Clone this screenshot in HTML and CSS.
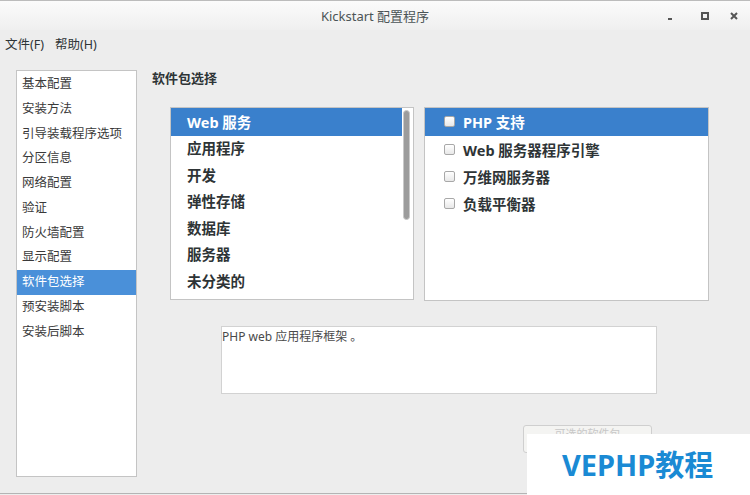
FILE: index.html
```html
<!DOCTYPE html>
<html lang="zh-CN">
<head>
    <meta charset="UTF-8">
    <title>Kickstart 配置程序</title>
    <link rel="stylesheet" href="styles.css">
</head>
<body>
    <div class="window">
        <div class="titlebar">
            <span></span>
            <span class="title">Kickstart 配置程序</span>
            <div class="controls">
                <svg class="min" width="10" height="10" viewBox="0 0 10 10"><rect x="2" y="7" width="4" height="2" fill="#555"/></svg>
                <svg width="10" height="10" viewBox="0 0 10 10"><rect x="2" y="2" width="6" height="6" fill="none" stroke="#555" stroke-width="2"/></svg>
                <svg width="10" height="10" viewBox="0 0 10 10"><path d="M2 2 L8 8 M8 2 L2 8" stroke="#555" stroke-width="2"/></svg>
            </div>
        </div>

        <div class="menubar">
            <span>文件(F)</span>
            <span>帮助(H)</span>
        </div>

        <div class="main">
            <div class="sidebar">
                <div class="side-item">基本配置</div>
                <div class="side-item">安装方法</div>
                <div class="side-item">引导装载程序选项</div>
                <div class="side-item">分区信息</div>
                <div class="side-item">网络配置</div>
                <div class="side-item">验证</div>
                <div class="side-item">防火墙配置</div>
                <div class="side-item">显示配置</div>
                <div class="side-item selected">软件包选择</div>
                <div class="side-item">预安装脚本</div>
                <div class="side-item">安装后脚本</div>
            </div>

            <div class="content">
                <div class="heading">软件包选择</div>

                <div class="lists">
                    <div class="group-box">
                        <div class="group-items">
                            <div class="group-item selected">Web 服务</div>
                            <div class="group-item">应用程序</div>
                            <div class="group-item">开发</div>
                            <div class="group-item">弹性存储</div>
                            <div class="group-item">数据库</div>
                            <div class="group-item">服务器</div>
                            <div class="group-item">未分类的</div>
                        </div>
                        <div class="scrollbar">
                            <div class="thumb"></div>
                        </div>
                    </div>

                    <div class="pkg-box">
                        <div class="pkg-item selected"><span class="check"></span>PHP 支持</div>
                        <div class="pkg-item"><span class="check"></span>Web 服务器程序引擎</div>
                        <div class="pkg-item"><span class="check"></span>万维网服务器</div>
                        <div class="pkg-item"><span class="check"></span>负载平衡器</div>
                    </div>
                </div>

                <div class="description">PHP web 应用程序框架 。</div>

                <button class="opt-button">可选的软件包</button>
            </div>
        </div>
    </div>

    <div class="watermark">VEPHP教程</div>
</body>
</html>
```

FILE: styles.css
```css
* {
    margin: 0;
    padding: 0;
    box-sizing: border-box;
}

body {
    width: 750px;
    height: 495px;
    overflow: hidden;
    background: #ededed;
    font-family: "Noto Sans", "Noto Sans CJK SC", sans-serif;
    color: #333;
    position: relative;
}

.window {
    height: 494px;
    border-bottom: 1px solid #b4b4b4;
    border-top: 1px solid #bcbcbc;
}

.titlebar {
    height: 29px;
    display: grid;
    grid-template-columns: 1fr auto 1fr;
    align-items: center;
    background: linear-gradient(#fbfbfb, #efefef);
}

.title {
    font-size: 13px;
    color: #4b5456;
}

.controls {
    display: flex;
    justify-content: flex-end;
    gap: 19px;
    padding-right: 11px;
}

.controls .min {
    margin-right: 5px;
}

.menubar {
    height: 26px;
    display: flex;
    align-items: center;
    gap: 11px;
    padding-left: 5px;
    font-size: 12.5px;
    color: #2e3436;
}

.main {
    display: flex;
    padding: 14px 0 0 16px;
}

.sidebar {
    width: 121px;
    height: 407px;
    background: #fff;
    border: 1px solid #c4c4c4;
    padding-top: 1px;
}

.side-item {
    height: 24.75px;
    line-height: 24.75px;
    padding-left: 5px;
    font-size: 12.5px;
    color: #3a3a3a;
}

.side-item.selected {
    background: #4a90d9;
    color: #fff;
}

.content {
    margin-left: 15px;
}

.heading {
    font-size: 13px;
    font-weight: bold;
    line-height: 16px;
    color: #2e3436;
}

.lists {
    display: flex;
    gap: 10px;
    margin: 21px 0 0 18px;
}

.group-box {
    width: 244px;
    height: 193px;
    background: #fff;
    border: 1px solid #c4c4c4;
    display: flex;
}

.group-items {
    flex: 1;
}

.group-item {
    height: 26.5px;
    line-height: 25.5px;
    padding-left: 16px;
    font-size: 14.5px;
    font-weight: bold;
    color: #2e3436;
}

.group-item.selected {
    height: 28px;
    line-height: 28px;
    background: #3a80cc;
    color: #fff;
}

.scrollbar {
    width: 11px;
    padding: 2px 2px 0 1px;
    background: #fff;
}

.thumb {
    height: 110px;
    width: 7px;
    border-radius: 4px;
    background: #9c9c9c;
    border: 1px solid #c9c9c9;
}

.pkg-box {
    width: 285px;
    height: 194px;
    background: #fff;
    border: 1px solid #c4c4c4;
}

.pkg-item {
    height: 27px;
    display: flex;
    align-items: center;
    padding-left: 19px;
    font-size: 14.5px;
    font-weight: bold;
    color: #2e3436;
}

.pkg-item.selected {
    height: 28px;
    padding-bottom: 2px;
    background: #3a80cc;
    color: #fff;
}

.check {
    width: 11px;
    height: 11px;
    margin-right: 8px;
    border: 1px solid #a8a8a8;
    border-radius: 2px;
    background: linear-gradient(#fff, #e8e8e8);
}

.description {
    width: 436px;
    height: 68px;
    margin: 25px 0 0 69px;
    background: #fff;
    border: 1px solid #d2d2d2;
    font-size: 12px;
    line-height: 16px;
    padding-top: 2px;
    color: #4a4a4a;
}

.opt-button {
    display: block;
    width: 129px;
    height: 28px;
    margin: 31px 0 0 371px;
    padding-bottom: 10px;
    border: 1px solid #cfcfcf;
    border-radius: 3px;
    background: #f4f4f2;
    font-family: inherit;
    font-size: 11px;
    line-height: 12px;
    color: #c8c8c8;
}

.watermark {
    position: absolute;
    left: 527px;
    top: 434px;
    width: 223px;
    height: 61px;
    background: #fff;
    color: #1a8ad4;
    font-size: 29px;
    font-weight: bold;
    line-height: 62px;
    padding-left: 35px;
    font-family: "Noto Sans", "Noto Sans CJK SC", sans-serif;
}
```
